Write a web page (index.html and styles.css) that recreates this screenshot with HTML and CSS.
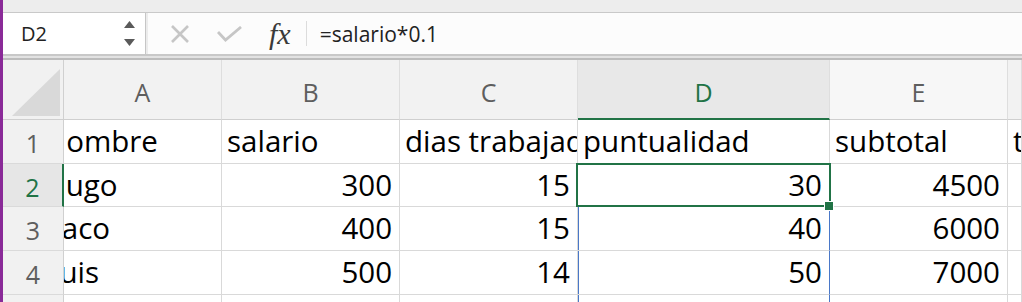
FILE: index.html
```html
<!DOCTYPE html>
<html lang="es">
<head>
<meta charset="utf-8">
<title>Hoja</title>
<link rel="stylesheet" href="styles.css">
</head>
<body>
<div class="app">
  <div class="edge"></div>
  <div class="main">
    <div class="topstrip"></div>
    <div class="fbar">
      <div class="namebox">
        <span class="ref">D2</span>
        <svg class="spin" width="12" height="26" viewBox="0 0 12 26"><polygon points="0,7 11,7 5.5,0" fill="#5a5a5a"/><polygon points="0,18 11,18 5.5,25" fill="#5a5a5a"/></svg>
      </div>
      <div class="formula">
        <svg class="ico-x" width="20" height="18" viewBox="0 0 20 18"><path d="M2 1 L18 17 M18 1 L2 17" stroke="#c6c6c6" stroke-width="2.6" fill="none"/></svg>
        <svg class="ico-ok" width="25" height="16" viewBox="0 0 25 16"><path d="M1 6 L8.5 14 L24 1" stroke="#c6c6c6" stroke-width="2.8" fill="none"/></svg>
        <span class="fx">fx</span>
        <span class="sep"></span>
        <span class="ftext">=salario*0.1</span>
      </div>
    </div>
    <div class="fbar-bottom"></div>
    <div class="sheet">
      <div class="corner"><svg width="50" height="48" viewBox="0 0 50 48"><polygon points="0,47 48,47 48,0" fill="#d9d9d9"/></svg></div>
      <div class="ch">A</div>
      <div class="ch">B</div>
      <div class="ch">C</div>
      <div class="ch ch-sel">D</div>
      <div class="ch ch-light">E</div>
      <div class="ch"></div>

      <div class="rh">1</div>
      <div class="c clip">Nombre</div>
      <div class="c">salario</div>
      <div class="c">dias trabajados</div>
      <div class="c">puntualidad</div>
      <div class="c">subtotal</div>
      <div class="c">total</div>

      <div class="rh rh-sel">2</div>
      <div class="c clip">Hugo</div>
      <div class="c n">300</div>
      <div class="c n">15</div>
      <div class="c n active">30</div>
      <div class="c n">4500</div>
      <div class="c"></div>

      <div class="rh">3</div>
      <div class="c clip">Paco</div>
      <div class="c n">400</div>
      <div class="c n">15</div>
      <div class="c n blue">40</div>
      <div class="c n">6000</div>
      <div class="c"></div>

      <div class="rh">4</div>
      <div class="c clip">Luis</div>
      <div class="c n">500</div>
      <div class="c n">14</div>
      <div class="c n blue">50</div>
      <div class="c n">7000</div>
      <div class="c"></div>

      <div class="rh">5</div>
      <div class="c"></div>
      <div class="c"></div>
      <div class="c"></div>
      <div class="c blue"></div>
      <div class="c"></div>
      <div class="c"></div>
    </div>
  </div>
</div>
</body>
</html>
```
FILE: styles.css
```css
* { box-sizing: border-box; }
html, body { margin: 0; padding: 0; }
body {
  width: 1022px;
  height: 302px;
  overflow: hidden;
  background: #ffffff;
  font-family: "Open Sans", Lato, sans-serif;
}
.app {
  display: flex;
  height: 302px;
  overflow: hidden;
}
.edge {
  width: 3px;
  flex: none;
  background: #8a2a98;
}
.main {
  flex: 1;
  display: flex;
  flex-direction: column;
  min-width: 0;
  min-height: 0;
  overflow: hidden;
}
.topstrip {
  height: 13px;
  background: #ededed;
  border-bottom: 1px solid #c9c9c9;
  flex: none;
}
.fbar {
  height: 41px;
  display: flex;
  flex: none;
  background: #ececec;
}
.namebox {
  width: 143px;
  flex: none;
  background: #ffffff;
  border-right: 1px solid #c6c6c6;
  display: flex;
  align-items: center;
  justify-content: space-between;
  padding: 0 9px 0 18px;
}
.ref {
  font-size: 20px;
  color: #222;
}
.formula {
  flex: 1;
  margin-left: 2px;
  background: #fcfcfc;
  display: flex;
  align-items: center;
  padding-left: 22px;
}
.ico-x { flex: none; }
.ico-ok { flex: none; margin-left: 27px; }
.fx {
  font-family: "Liberation Serif", serif;
  font-style: italic;
  font-size: 30px;
  color: #3a3a3a;
  margin-left: 27px;
  line-height: 1;
}
.sep {
  width: 1px;
  height: 25px;
  background: #dcdcdc;
  margin-left: 15px;
}
.ftext {
  margin-left: 13px;
  font-size: 21px;
  color: #222;
}
.fbar-bottom {
  height: 6px;
  flex: none;
  background: #e2e2e2;
  border-top: 2px solid #c8c8c8;
  border-bottom: 2px solid #bcbcbc;
}
.sheet {
  flex: 1;
  min-height: 0;
  overflow: hidden;
  display: grid;
  grid-template-columns: 61px 158px 178px 178px 252px 178px 1fr;
  grid-template-rows: 60px 44px 43px 44px 44px 30px;
}
.corner {
  background: #f1f1f1;
  border-right: 1px solid #d0d0d0;
  border-bottom: 1px solid #cfcfcf;
  padding: 9px 0 0 9px;
}
.corner svg { display: block; }
.ch {
  background: #f2f2f2;
  border-right: 1px solid #dedede;
  border-bottom: 1px solid #cfcfcf;
  display: flex;
  align-items: center;
  justify-content: center;
  padding-top: 5px;
  font-size: 25px;
  color: #5e5e5e;
}
.ch-sel {
  background: #e8e8e8;
  color: #217346;
  border-bottom: 2px solid #217346;
}
.ch-light { background: #f7f7f7; }
.rh {
  background: #f1f1f1;
  border-right: 1px solid #d0d0d0;
  border-bottom: 1px solid #dadada;
  display: flex;
  align-items: center;
  justify-content: center;
  padding-top: 3px;
  font-size: 25px;
  color: #5e5e5e;
}
.rh-sel {
  background: #e6e6e6;
  color: #217346;
  border-right: 2px solid #217346;
}
.c {
  border-right: 1px solid #d9d9d9;
  border-bottom: 1px solid #d9d9d9;
  font-size: 29.5px;
  color: #000;
  line-height: 42px;
  padding: 0 5px;
  white-space: nowrap;
  overflow: hidden;
  position: relative;
}
.c.n { text-align: right; padding-right: 7px; }
.clip { text-indent: -20px; padding-left: 0; }
.c.blue {
  border-right-color: #4a78c8;
  box-shadow: inset 1px 0 0 #4a78c8;
}
.c.active { overflow: visible; }
.c.active::after {
  content: "";
  position: absolute;
  left: -2px;
  top: -1px;
  right: -2px;
  bottom: -1px;
  border: 2px solid #217346;
  pointer-events: none;
}
.c.active::before {
  content: "";
  position: absolute;
  right: -5px;
  bottom: -5px;
  width: 8px;
  height: 8px;
  background: #217346;
  border: 1px solid #ffffff;
  z-index: 2;
}
```
